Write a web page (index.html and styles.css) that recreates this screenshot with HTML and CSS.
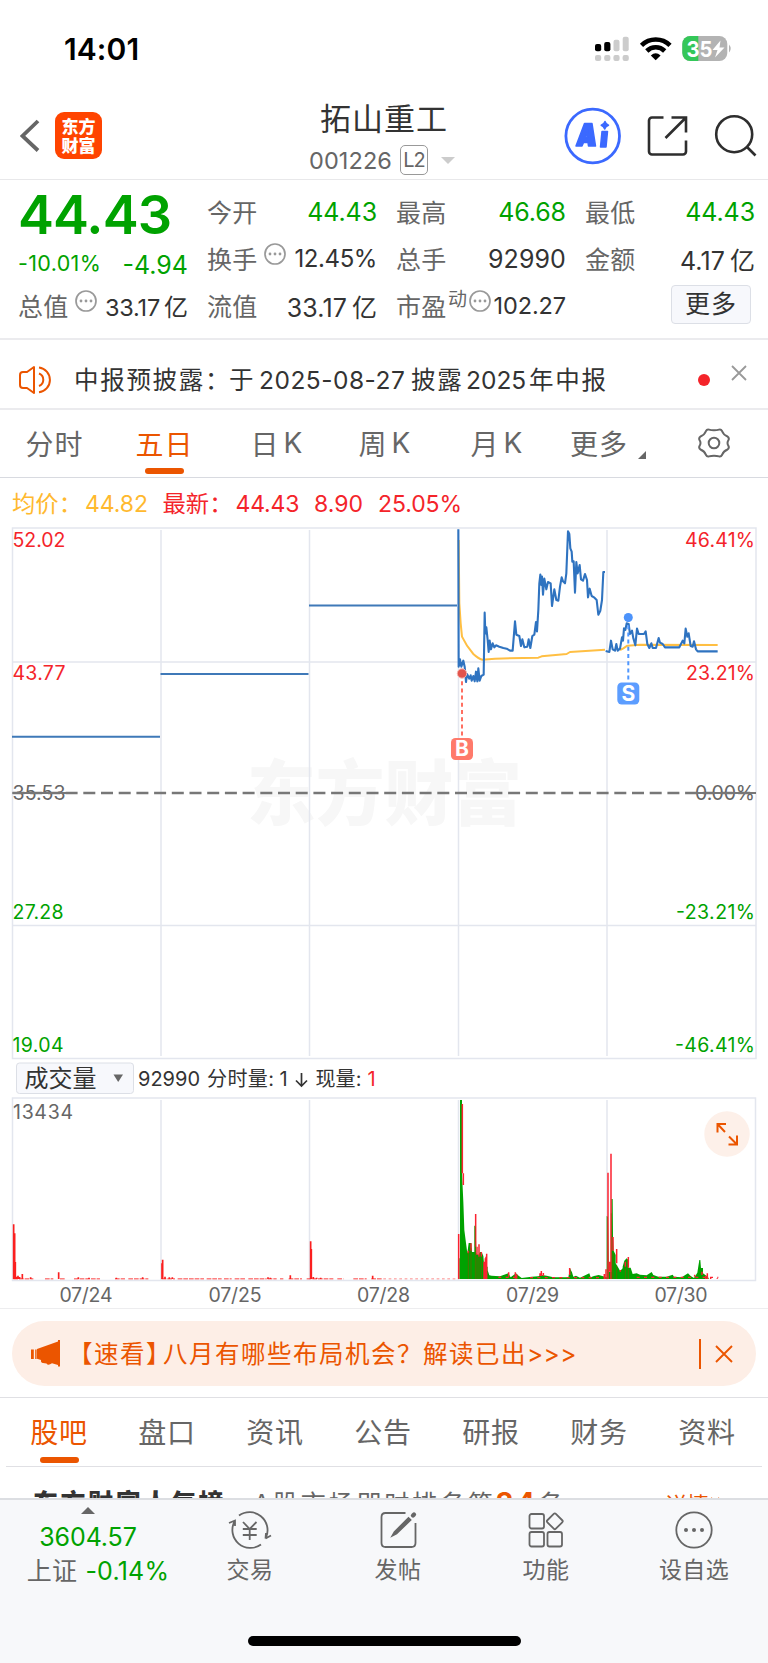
FILE: index.html
```html
<!DOCTYPE html>
<html lang="zh-CN">
<head>
<meta charset="utf-8">
<title>拓山重工 001226</title>
<link rel="stylesheet" href="styles.css">
</head>
<body>
<div class="phone">
  <div class="status">
    <span class="clock">14:01</span>
    <svg class="status-icons" width="140" height="28" viewBox="594 35 140 28">
      <g fill="#ccc"><rect x="613.5" y="39.7" width="6" height="11.5" rx="2"/><rect x="622.7" y="36.7" width="6" height="14.5" rx="2"/><rect x="595" y="55" width="6.2" height="6" rx="2"/><rect x="604.2" y="55" width="6.2" height="6" rx="2"/><rect x="613.4" y="55" width="6.2" height="6" rx="2"/><rect x="622.6" y="55" width="6.2" height="6" rx="2"/></g>
      <rect x="595" y="44" width="6.2" height="7.2" rx="2"/><rect x="604.2" y="42" width="6.2" height="9.2" rx="2"/>
      <g fill="none" stroke="#000" stroke-width="4.6"><path d="M641.5 45.3A20.5 20.5 0 0 1 670 45.3"/><path d="M646.8 51A12.7 12.7 0 0 1 664.7 51"/></g>
      <path d="M655.7 60.3L650.8 55.4Q655.7 51 660.6 55.4Z"/>
      <clipPath id="cell"><rect x="682.3" y="36" width="45" height="25" rx="8"/></clipPath>
      <g clip-path="url(#cell)"><path fill="#b3b3b3" d="M682 36h46v25h-46z"/><path fill="#34c759" d="M682 36h16.3v25H682z"/></g>
      <path d="M729 44.5q3.3 4 0 8z" fill="#b3b3b3"/>
      <text x="686.5" y="57" class="cell-text" textLength="26" lengthAdjust="spacingAndGlyphs">35</text>
      <path fill="#fff" d="M720.5 40.5L712.5 50h5L715 57.500L724.5 47.500h-5z"/>
    </svg>
  </div>

  <div class="head">
    <svg class="back" width="20" height="36" viewBox="0 0 20 36"><path d="M18 3L2.500 18L18 32.500" fill="none" stroke="#666" stroke-width="3.800"/></svg>
    <div class="brand"><span>东方</span><span>财富</span></div>
    <div class="name">
      <div class="title">拓山重工</div>
      <div class="code"><span>001226</span><b class="lv">L2</b><i class="caret"></i></div>
    </div>
    <svg class="head-icons" width="200" height="60" viewBox="562 106 200 60">
      <circle cx="592.700" cy="136" r="26.800" fill="none" stroke="#3b69ff" stroke-width="2.800"/>
      <g fill="#3b69ff" stroke="#3b69ff" stroke-width="1.500" stroke-linejoin="round"><path fill-rule="evenodd" d="M584.500 123.500H592L595.500 146H588.500L588 142.500H583.500L582 146H576ZM588 130.500L585.500 137.500H587.500Z"/><path d="M602 131.500h5.500l-1.500 15.500h-5.500z"/><path d="M605 121.500q1 3 3.500 3.800q-3 1-3.800 3.700q-1-3-3.500-3.800q3-.9 3.800-3.700z"/></g>
      <g fill="none" stroke="#2e2e2e" stroke-width="2.600"><path d="M663.500 117.500H652a3 3 0 0 0-3 3V151.500a3 3 0 0 0 3 3H683a3 3 0 0 0 3-3V140.500"/><path d="M671.500 117.500H686V132.500M686 117.500L665.500 138"/><circle cx="734.200" cy="134.200" r="18"/><path d="M746.500 146.500L755.500 155.500"/></g>
    </svg>
  </div>

  <div class="quote">
    <div class="qcol">
      <div class="last">44.43</div>
      <div class="chg"><span class="pct">-10.01%</span><span class="diff">-4.94</span></div>
      <div class="q"><span class="k">总值</span><svg class="tip tip-a" viewBox="0 0 22 22"><use href="#tip"/></svg><span class="v s1">33.17<em>亿</em></span></div>
    </div>
    <div class="qcol">
      <div class="q"><span class="k">今开</span><span class="v g">44.43</span></div>
      <div class="q"><span class="k">换手</span><svg class="tip tip-a" viewBox="0 0 22 22"><use href="#tip"/></svg><span class="v s2">12.45%</span></div>
      <div class="q"><span class="k">流值</span><span class="v">33.17<em>亿</em></span></div>
    </div>
    <div class="qcol">
      <div class="q"><span class="k">最高</span><span class="v g">46.68</span></div>
      <div class="q"><span class="k">总手</span><span class="v">92990</span></div>
      <div class="q"><span class="k">市盈</span><span class="sup">动</span><svg class="tip" viewBox="0 0 22 22"><use href="#tip"/></svg><span class="v s3">102.27</span></div>
    </div>
    <div class="qcol">
      <div class="q"><span class="k">最低</span><span class="v g">44.43</span></div>
      <div class="q"><span class="k">金额</span><span class="v">4.17<em>亿</em></span></div>
      <div class="q more-row"><span class="more">更多</span></div>
    </div>
  </div>
  <svg width="0" height="0" class="defs"><symbol id="tip" viewBox="0 0 22 22"><circle cx="11" cy="11" r="10" fill="none" stroke="#999" stroke-width="1.700"/><g fill="#999"><circle cx="6" cy="11" r="1.400"/><circle cx="11" cy="11" r="1.400"/><circle cx="16" cy="11" r="1.400"/></g></symbol></svg>

  <div class="notice">
    <svg width="34" height="30" viewBox="0 0 34 30" fill="none" stroke="#eb5500" stroke-width="2"><path d="M16 2V28L9 23H5Q2 23 2 20V10Q2 7 5 7H9Z" stroke-linejoin="round"/><path d="M21 2.500A12.500 12.500 0 0 1 21 27.300"/><path d="M21 8.500A6.700 6.700 0 0 1 21 21"/></svg>
    <div class="notice-text"><span class="n1">中报预披露：</span><span class="n2">于</span><span class="n3">2025-08-27</span><span class="n4">披露</span><span class="n5">2025</span><span class="n6">年中报</span></div>
    <i class="dot"></i>
    <svg class="close" width="18" height="18" viewBox="0 0 18 18"><path d="M2 2L16 16M16 2L2 16" stroke="#999" stroke-width="1.800"/></svg>
  </div>

  <div class="periods">
    <span class="p">分时</span><span class="p on">五日</span><span class="p">日<u>K</u></span><span class="p">周<u>K</u></span><span class="p">月<u>K</u></span><span class="p">更多<i class="corner"></i></span>
    <span class="p"><svg width="34" height="32" viewBox="0 0 34 32" fill="none" stroke="#666" stroke-width="2"><path d="M12 2.600Q14 3.200 17 3.200Q20 3.200 22 2.600Q24 2 25 4Q26.500 8 30.500 9.500Q32.500 11 31.500 13Q30.500 14.500 30.500 16Q30.500 17.500 31.500 19Q32.500 21 30.500 22.500Q26.500 24 25 28Q24 30 22 29.400Q20 28.800 17 28.800Q14 28.800 12 29.400Q10 30 9 28Q7.500 24 3.500 22.500Q1.500 21 2.500 19Q3.500 17.500 3.500 16Q3.500 14.500 2.500 13Q1.500 11 3.500 9.500Q7.500 8 9 4Q10 2 12 2.600Z"/><circle cx="17" cy="16" r="5.300"/></svg></span>
  </div>

  <svg class="chart" width="768" height="831" viewBox="0 478 768 831">
    <g class="legend">
      <text x="12" y="512" fill="#ffb92e" textLength="70" lengthAdjust="spacingAndGlyphs">均价：</text><text x="85" y="512" fill="#ffb92e" textLength="63">44.82</text>
      <g fill="#f4242a"><text x="162.500" y="512" textLength="70" lengthAdjust="spacingAndGlyphs">最新：</text><text x="235.500" y="512" textLength="64">44.43</text><text x="314" y="512" textLength="49">8.90</text><text x="378" y="512" textLength="84">25.05%</text></g>
    </g>
    <text class="mark" x="247" y="819" textLength="275" lengthAdjust="spacingAndGlyphs">东方财富</text>
    <g fill="none" stroke="#e3e6ee" stroke-width="1.500">
      <path d="M12.500 528H756V1058.500H12.500ZM12 662H756M12 925.500H756"/>
      <path d="M161 530V1056M309.500 530V1056M458.500 530V1056M607 530V1056"/>
      <path d="M12.500 1098H755.500V1280.500H12.500Z"/>
      <path d="M161 1100V1280M309.500 1100V1280M458.500 1100V1280M607 1100V1280"/>
    </g>
    <path d="M0 1308.700H768" stroke="#ededef" stroke-width="1.500"/>
    <path d="M12.500 793H756" stroke="#777" stroke-width="2.300" stroke-dasharray="12 5.700"/>
    <g fill="none" stroke="#3f79b8" stroke-width="2"><path d="M12 736.700H160M160.500 674H308.500M309 605.500H457"/></g>
    <g transform="translate(440 520) scale(.33333)" fill="none" stroke-linejoin="round">
      <path stroke="#ffbf43" stroke-width="6" d="M56 60L58 250L62 310L66 350Q80 380 100 402Q115 416 127 419L165 416L295 413L305 409L380 402L390 396L495 389M540 390L550 385L562 377L600 374L833 375"/>
      <path stroke="#2f73c0" stroke-width="6.300" d="M55 28L56 440L60 418L64 440L70 422L74 440L78 486L81 462L88 476L92 466L95 482L100 468L104 484L108 455L112 484L115 445L119 482L124 468L131 464L134 278L136 340L139 322L143 360L146 396L149 362L153 388L158 370L163 382L168 376L178 380L190 384L200 386L210 392L218 392L225 304L229 344L238 348L243 378L247 358L253 382L262 380L266 358L271 384L277 348L283 344L288 306L291 334L295 270L298 190L301 164L304 195L306 170L309 224L313 176L319 208L324 186L332 190L336 258L343 208L349 240L355 242L360 200L365 172L369 184L375 190L379 160L384 34L388 42L391 85L395 95L397 125L401 124L405 218L409 126L413 160L419 135L423 178L429 182L435 162L441 180L444 232L449 206L455 228L462 232L470 240L475 284L481 272L486 240L490 156L495 156M497 393L508 396L513 362L518 388L525 392L529 372L533 392L540 386L546 352L549 362L552 325L556 330L560 310L566 312L570 342L576 332L580 355L586 376L591 326L596 342L612 342L617 334L622 372L628 384L634 370L638 384L648 384L656 354L660 368L668 372L675 382L718 382L728 362L733 370L737 326L742 350L746 340L752 378L758 380L762 364L768 388L773 394L833 394"/>
    </g>
    <path d="M462 674V738" stroke="#ff6f61" stroke-width="2" stroke-dasharray="4 3.200"/>
    <circle cx="462" cy="673.500" r="4.700" fill="#e3544c" stroke="#f6b5ae" stroke-width="1"/>
    <rect x="451" y="738" width="22" height="22" rx="4.500" fill="#ff7a6b"/>
    <text class="pin" x="462" y="756" text-anchor="middle">B</text>
    <path d="M628.300 618V682" stroke="#4f97ff" stroke-width="2" stroke-dasharray="4 3.200"/>
    <circle cx="628.300" cy="617.500" r="4.500" fill="#4c93fb"/>
    <rect x="617.300" y="682.500" width="22" height="22" rx="4.500" fill="#5c9dff"/>
    <text class="pin" x="628.300" y="701" text-anchor="middle">S</text>

    <g class="axis">
      <g fill="#f4242a"><text x="12.500" y="547" textLength="53">52.02</text><text x="12.500" y="680" textLength="53">43.77</text><text x="685" y="547" textLength="70">46.41%</text><text x="686" y="680" textLength="69">23.21%</text></g>
      <g fill="#666"><text x="12.500" y="800" textLength="53">35.53</text><text x="695" y="800" textLength="60">0.00%</text></g>
      <path d="M12.500 793H66M695 793H756" stroke="#777" stroke-width="1.800"/>
      <g fill="#00a200"><text x="12.500" y="919" textLength="51">27.28</text><text x="12.500" y="1052" textLength="51">19.04</text><text x="676" y="919" textLength="79">-23.21%</text><text x="675" y="1052" textLength="80">-46.41%</text></g>
      <g fill="#666"><text x="13" y="1119" textLength="60">13434</text><text x="59.500" y="1302" textLength="53">07/24</text><text x="208.500" y="1302" textLength="53">07/25</text><text x="357" y="1302" textLength="53">07/28</text><text x="506" y="1302" textLength="53">07/29</text><text x="654.500" y="1302" textLength="53">07/30</text></g>
    </g>

    <rect x="16.500" y="1063" width="117" height="30.500" rx="3" fill="#f7f8fc" stroke="#dcdfe6"/>
    <text class="vol-name" x="24.500" y="1087" textLength="72" lengthAdjust="spacingAndGlyphs">成交量</text>
    <path d="M113.500 1074.500H123L118.200 1082Z" fill="#666"/>
    <g class="vol" fill="#333"><text x="138" y="1085.500" textLength="62">92990</text><text x="207" y="1085.500" textLength="67">分时量:</text><text x="279.500" y="1085.500">1</text><path d="M301.500 1073V1086M296 1080.500L301.500 1086L307 1080.500" fill="none" stroke="#333" stroke-width="1.700"/><text x="315.500" y="1085.500" textLength="46">现量:</text><text x="367.500" y="1085.500" fill="#f4242a">1</text></g>

    <g transform="translate(0 1050) scale(.33333)" fill="none" stroke="#fb1f1f" stroke-width="5">
      <path d="M41 687V523M44 687V550M46 687V636M50 687V680M54 687V677M59 687V681M67 687V672M92 687V682M176 687V667M235 687V682M267 687V683M349 687V683M428 687V682M488 687V629M486 687V640M495 687V680M508 687V682M517 687V682M804 687V682M811 687V683M871 687V676M932 687V574M934 687V597M940 687V681M950 687V683M962 687V683M1118 687V677"/>
      <path stroke-width="2.500" d="M40 686.500H100M135 686.500H160M180 686.500H195M222 686.500H300M345 686.500H375M385 686.500H445M485 686.500H525M533 686.500H612M620 686.500H665M672 686.500H695M704 686.500H735M745 686.500H800M803 686.500H830M840 686.500H850M866 686.500H906M920 686.500H1000M1012 686.500H1030M1060 686.500H1100M1114 686.500H1145" stroke-dasharray="14 3"/>
      <path stroke-width="1.500" d="M1150 686.500H1370" stroke-dasharray="8 8"/>
    </g>
    <g transform="translate(440 1080) scale(.33333)" fill="none">
      <path fill="#00a200" d="M58 597V535L60 535V60H66V280L70 365L73 450L78 489L82 520L86 489H94L96 516L103 516V437H107L109 520L115 525L120 516L125 516L130 528L133 560L143 560V571L148 586L155 587L180 589L205 580L212 592L228 580L234 586L245 594L275 590L295 589L305 585L320 587L340 592L385 592L390 565L396 577L400 590L408 587L420 593L448 580L452 592L462 588L476 585L500 592V408L504 410L507 575L514 575V357L518 357L519 470L521 512L527 525V550L535 563L541 574L545 568L548 565V560L553 542L560 535L565 540V563L572 563L578 582L590 580L600 584L620 586L635 576L640 585L655 590L680 590L698 584L702 590L725 592L744 580L752 588L762 594L772 578L778 540H781L783 564L789 564V580L800 588L806 594V597Z"/>
      <path stroke="#fb2230" stroke-width="4.500" d="M56 597V462M67 280V72M70 315V280M107 500V402M85 520V512M93 512V490M111 525V500M117 530V493M124 530V516M132 597V545M136 597V535M140 597V521M138 597V530M206 590V577M226 596V577M230 596V583M300 588V580M304 588V573M310 588V579M389 585V564M493 597V582M498 597V568M504 597V278M513 597V221M509 575V545M519 512V471M530 550V507M541 575V570M556 560V545M565 563V531M764 590V584M786 585V575M797 597V587M802 597V580M812 597V594M832 597V595"/>
      <path stroke="#8d4a00" stroke-width="3" opacity=".55" d="M85 597V515M93 597V505M106 597V440M111 597V530M117 597V530M124 597V528M514 597V400M519 597V520M530 597V555M556 597V560M565 597V565"/>
      <path stroke="#fb2230" stroke-width="4" stroke-dasharray="9 13" d="M175 592H235M270 593H490M590 592H835"/>
    </g>
    <circle cx="727" cy="1134" r="22.700" fill="#fdf0e9"/>
    <g fill="none" stroke="#eb5500" stroke-width="2"><path d="M717.500 1132.500V1124H726M717.500 1124L725 1132M737 1135.500V1144.500H728.500M737 1144.500L729 1136.500"/></g>
  </svg>

  <div class="promo">
    <svg width="32" height="28" viewBox="0 0 32 28" fill="#eb5500"><path d="M1 9.500h2.800v9.500H1zM5.200 9.500h1.400v9.500H5.200zM7 9L28 1.500V0h2V26.500h-2V25L22 23.300Q18 26 16.500 23.500L13 23Q10.500 22.500 11 20L7 18.800Z"/></svg>
    <span class="promo-text">【速看】<span class="ask">八月有哪些布局机会？</span><span>解读已出</span><span class="arrows">&gt;&gt;&gt;</span></span>
    <i class="bar"></i>
    <svg class="px" width="18" height="18" viewBox="0 0 18 18"><path d="M1 1L17 17M17 1L1 17" stroke="#eb5500" stroke-width="1.900"/></svg>
  </div>

  <div class="subtabs"><span class="on">股吧</span><span>盘口</span><span>资讯</span><span>公告</span><span>研报</span><span>财务</span><span>资料</span></div>

  <div class="rank"><b class="r1">东方财富人气榜</b><span class="r2">A股市场即时排名第<b>34</b>名</span><span class="r3">详情<svg width="18" height="18" viewBox="0 0 18 18"><path d="M2 2L8 9L2 16M9 2L15 9L9 16" fill="none" stroke="#eb5500" stroke-width="2"/></svg></span></div>

  <div class="bottom">
    <div class="index"><i class="up"></i><span class="idx">3604.57</span><span class="idx2"><em>上证</em>-0.14%</span></div>
    <div class="item"><svg width="44" height="40" viewBox="0 0 44 40" fill="none" stroke="#666" stroke-width="1.800"><path d="M11 5.600A18 18 0 0 1 38 27.500M37.500 28.500L38 23M37.500 28.500L43 25.500M33 34.500A18 18 0 0 1 6.500 11.500M1 13L7 10.500V16"/><path d="M15 12L21.700 19L28.500 12M21.700 19V30M14.800 19H28.700M14.800 25H28.700"/></svg><span>交易</span></div>
    <div class="item"><svg width="44" height="40" viewBox="-1.500 0 44 40" fill="none" stroke="#666" stroke-width="1.800"><path d="M28 3H8Q4 3 4 7V33Q4 37 8 37H34Q38 37 38 33V13"/><path d="M36.500 4.500L35.500 5.500" stroke-width="4.300" stroke-linecap="round"/><path d="M33 10L31 8L17 22L15 25.500L19 23.500Z" fill="#666"/></svg><span>发帖</span></div>
    <div class="item"><svg width="44" height="40" viewBox="0 0 44 40" fill="none" stroke="#666" stroke-width="1.800"><rect x="5.500" y="4" width="14.500" height="14.500" rx="2"/><rect x="5.500" y="22" width="14.500" height="14.500" rx="2"/><rect x="23.500" y="22" width="14.500" height="14.500" rx="2"/><rect x="24.800" y="5.300" width="12" height="12" rx="1.500" transform="rotate(45 30.800 11.300)"/></svg><span>功能</span></div>
    <div class="item"><svg width="44" height="40" viewBox="0 0 44 40" fill="none" stroke="#666" stroke-width="1.800"><circle cx="22" cy="20" r="17.700"/><g fill="#666" stroke="none"><circle cx="14" cy="20" r="2"/><circle cx="22" cy="20" r="2"/><circle cx="30" cy="20" r="2"/></g></svg><span>设自选</span></div>
    <i class="home"></i>
  </div>
</div>
</body>
</html>
```
FILE: styles.css
```css
* { box-sizing: border-box; }
body { margin: 0; background: #fff; font-family: Inter, "Noto Sans CJK SC", sans-serif; font-weight: 400; color: #333; }
i, em { font-style: normal; }
u { text-decoration: none; }
svg { display: block; flex: none; }
span, b { white-space: nowrap; }
.phone { width: 768px; height: 1663px; overflow: hidden; display: flex; flex-direction: column; }
.phone > * { flex: none; }
.defs { height: 0; }

.status { height: 90px; display: flex; justify-content: space-between; padding: 0 34px 0 64px; }
.clock { font-size: 30px; font-weight: 600; line-height: 36px; margin-top: 31px; color: #000; letter-spacing: .1px; }
.status-icons { margin-top: 35px; }
.cell-text { font-size: 22px; font-weight: 700; fill: #fff; }

.head { height: 90px; display: flex; border-bottom: 1px solid #e8e8ea; padding-left: 20px; }
.back { margin-top: 28px; }
.brand { width: 47px; height: 47px; margin: 22px 0 0 15px; border-radius: 9px; background: #ff4400; color: #fff; display: flex; flex-direction: column; align-items: center; justify-content: center; font: 900 17px/18.500px "Noto Sans CJK SC", sans-serif; }
.name { width: 320px; margin-left: 122px; display: flex; flex-direction: column; align-items: center; }
.title { font-size: 31px; line-height: 36px; margin-top: 11px; letter-spacing: 1px; }
.code { display: flex; align-items: center; height: 32px; margin-top: 7px; width: 150px; font-size: 23.500px; color: #666; }
.code span { width: 81px; letter-spacing: .1px; }
.lv { margin-left: 10px; width: 28px; height: 30px; border: 1px solid #999; border-radius: 5px; font-weight: 400; font-size: 20px; line-height: 29px; text-align: center; letter-spacing: -1px; }
.caret { margin-left: 13px; border: 7px solid transparent; border-top-color: #ccc; border-bottom: 0; }
.head-icons { margin: 16px 0 0 18px; }

.quote { height: 160px; display: grid; grid-template-columns: repeat(4, 170px); column-gap: 19px; padding: 8px 0 0 18px; border-bottom: 2px solid #ebebee; }
.qcol { height: 141px; }
.q { height: 47px; display: flex; align-items: center; font-size: 25px; }
.k { color: #666; width: 51px; letter-spacing: .2px; margin-top: -2px; }
.v { margin-left: auto; letter-spacing: .1px; }
.v em { margin-left: 5px; font-size: 25px; letter-spacing: 0; }
.g { letter-spacing: -.1px; color: #00a200; }
.tip { width: 22px; height: 22px; margin-top: -9px; }
.tip-a { margin-left: 6px; }
.sup { font-size: 19px; color: #666; margin: -17px 2px 0 1px; }
.s1 { font-size: 23.500px; letter-spacing: -.2px; }
.s1 em { margin-left: 4px; font-size: 24px; }
.s2 { font-size: 24px; letter-spacing: -.4px; }
.s3 { font-size: 23.500px; letter-spacing: -.1px; }
.last { height: 54px; font-size: 54px; line-height: 54px; font-weight: 600; color: #00a200; letter-spacing: -.9px; }
.chg { height: 40px; display: flex; justify-content: space-between; color: #00a200; line-height: 40px; }
.pct { font-size: 21.500px; letter-spacing: .35px; line-height: 42px; }
.diff { font-size: 25px; line-height: 47px; letter-spacing: 0; }
.more-row { justify-content: flex-end; }
.more { width: 80px; height: 39px; margin: -2px 4px 0 0; border: 1.500px solid #dcdfe6; border-radius: 4px; background: #f7f8fc; text-align: center; line-height: 36px; font-size: 25px; letter-spacing: 1px; }

.notice { height: 70px; border-bottom: 2px solid #ebebee; display: flex; align-items: center; padding: 11px 20px 0 18px; font-size: 24.500px; }
.notice-text { display: flex; align-items: baseline; margin: -2px 0 0 22px; width: 625px; }
.n1, .n2, .n4, .n6 { letter-spacing: 1.700px; }
.n1 { width: 155px; }
.n2 { width: 30px; }
.n3 { width: 152px; letter-spacing: .5px; }
.n4 { width: 55px; }
.n5 { width: 63px; letter-spacing: 0; }
.dot { width: 12px; height: 12px; border-radius: 6px; background: #f4242a; }
.close { margin: -14px 0 0 20px; }

.periods { height: 68px; border-bottom: 1.500px solid #d8dae0; display: grid; grid-template-columns: 109px 111px 114px 102px 122px 82px 147px; width: 768px; overflow: hidden; font-size: 28px; color: #666; }
.p { display: flex; justify-content: center; align-items: center; position: relative; padding-bottom: 2px; letter-spacing: 1px; }
.p u { margin-left: 4px; }
.on { color: #eb5500; position: relative; }
.on::after { content: ""; position: absolute; left: 50%; margin-left: -19.500px; bottom: 3px; width: 39px; height: 6px; border-radius: 3px; background: #eb5500; }
.corner { position: absolute; right: -6px; bottom: 18px; border-left: 8px solid transparent; border-bottom: 8px solid #666; }

.chart { font-family: Inter, "Noto Sans CJK SC", sans-serif; }
.legend { font-size: 23px; }
.mark { font: 900 71px "Noto Sans CJK SC", sans-serif; fill: #f7f7f7; }
.pin { font-size: 21px; font-weight: 700; fill: #fff; }
.axis { font-size: 19.500px; }
.vol-name { font-size: 24px; fill: #333; }
.vol { font-size: 20px; }

.promo { height: 65px; margin: 12px 12px 11px; border-radius: 33px; background: #fdeee6; color: #eb5500; display: flex; align-items: center; padding-left: 18px; font-size: 24.500px; }
.promo-text { margin: -2px 0 0 6px; letter-spacing: 1.500px; width: 631px; }
.ask { margin-left: -9px; }
.arrows { letter-spacing: .4px; }
.bar { width: 1.500px; height: 30px; background: #eb5500; }
.px { margin-left: 14px; }

.subtabs { height: 70px; border-top: 1px solid #e0e0e4; display: grid; grid-template-columns: repeat(7, 108px); padding-left: 5px; font-size: 28px; line-height: 70px; letter-spacing: .8px; color: #666; text-align: center; position: relative; }
.subtabs::after { content: ""; position: absolute; left: 6px; right: 6px; bottom: 0; height: 1px; background: #e0e0e4; }
.subtabs .on::after { bottom: 5px; }
.rank { height: 31px; overflow: hidden; display: flex; padding: 18px 0 0 33px; font-size: 25px; line-height: 36px; }
.r1 { width: 220px; letter-spacing: 2.600px; font-weight: 900; }
.r2 { color: #666; width: 412px; letter-spacing: 2.800px; }
.r2 b { color: #eb5500; font-size: 28px; }
.r3 { color: #eb5500; display: flex; align-items: center; height: 36px; margin-top: 2px; font-size: 22px; }

.bottom { height: 165px; border-top: 2px solid #dcdee2; background: #f7f8fa; display: grid; grid-template-columns: 176px repeat(4, 148px); position: relative; color: #666; }
.index { display: flex; flex-direction: column; align-items: center; font-size: 25px; color: #00a200; }
.up { margin-top: 7px; border: 7px solid transparent; border-bottom-color: #666; border-top: 0; }
.idx { line-height: 32px; margin-top: 7px; letter-spacing: -.1px; }
.idx2 { line-height: 34px; margin: 1px 0 0 20px; letter-spacing: .2px; }
.idx2 em { color: #666; margin-right: 8px; letter-spacing: .3px; }
.item { display: flex; flex-direction: column; align-items: center; padding-top: 10px; font-size: 23px; line-height: 32px; letter-spacing: .4px; }
.item span { margin-top: 4px; }
.home { position: absolute; left: 248px; top: 136px; width: 273px; height: 10px; border-radius: 5px; background: #000; }
```
